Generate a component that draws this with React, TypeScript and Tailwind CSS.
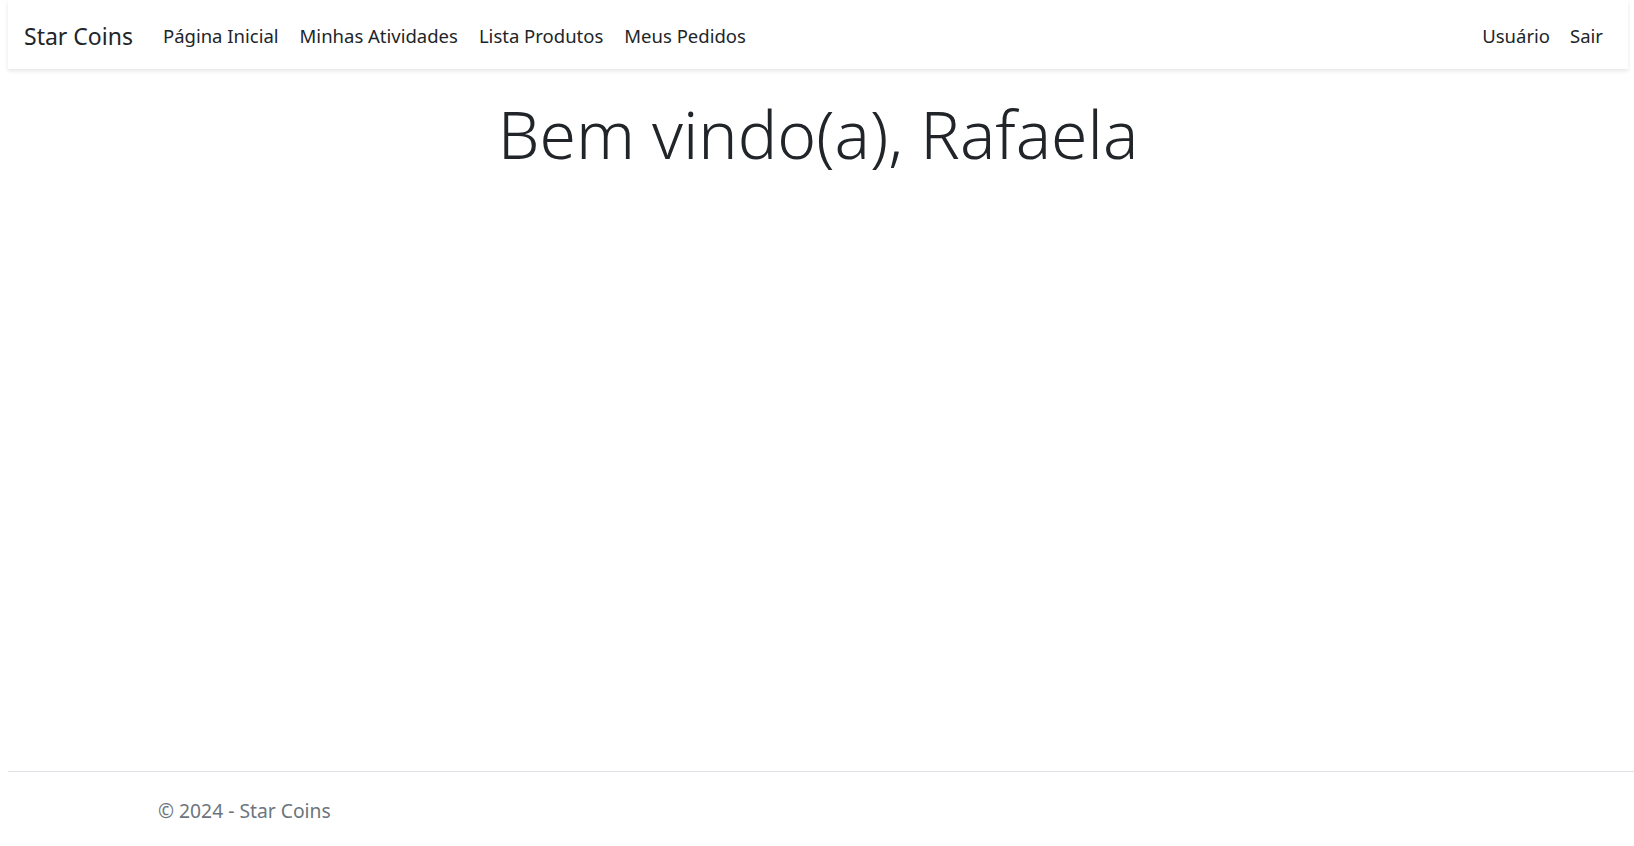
const links = ["Página Inicial", "Minhas Atividades", "Lista Produtos", "Meus Pedidos"];

export default function App() {
  return (
    <div className="min-h-[846px] flex flex-col bg-white pl-2 text-[#212529] font-['Noto_Sans',sans-serif]">
      {/* navbar */}
      <nav className="h-[69px] mr-[6px] flex items-center bg-white shadow-[0_2px_4px_rgba(0,0,0,0.1)] pt-[3px] pl-[16px] pr-[25px]">
        <span className="text-[23px] mr-[30px]">Star Coins</span>
        <ul className="flex gap-[21px] text-[18.5px]">
          {links.map((l) => (
            <li key={l}>{l}</li>
          ))}
        </ul>
        <ul className="ml-auto flex gap-[20px] text-[18.5px]">
          <li>Usuário</li>
          <li>Sair</li>
        </ul>
      </nav>

      {/* main */}
      <main className="flex-1 flex justify-center pr-[6px] pt-[31px]">
        <h1 className="text-[66px] font-light leading-none">Bem vindo(a), Rafaela</h1>
      </main>

      {/* footer */}
      <footer className="h-[75px] border-t border-[#dee2e6] pl-[150px] pt-[25px] text-[19.3px] text-[#6c757d]">
        © 2024 - Star Coins
      </footer>
    </div>
  );
}
